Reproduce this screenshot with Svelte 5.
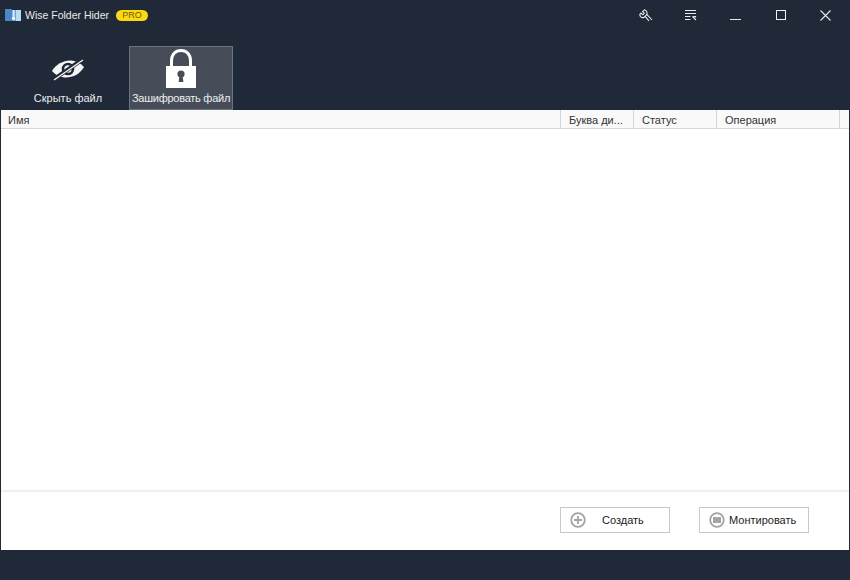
<script>
	const columns = [
		{ label: 'Имя', width: 560 },
		{ label: 'Буква ди...', width: 73 },
		{ label: 'Статус', width: 83 },
		{ label: 'Операция', width: 123 }
	];
</script>

<div class="window">
	<header class="titlebar">
		<div class="brand">
			<svg class="logo" width="16" height="12" viewBox="0 0 16 12">
				<path d="M0 0h6l1 1h9v11H0z" fill="#6ea6dc" />
				<path d="M0 0h5l1 1h2v11H0z" fill="#4b86c6" />
				<path d="M11 1h5v11h-5z" fill="#b9dcf5" />
				<path d="M7.500 1h2v8h-2z" fill="#dfeefa" />
				<circle cx="8.500" cy="9.500" r="1.700" fill="#eef6fc" />
			</svg>
			<span class="name">Wise Folder Hider</span>
			<span class="pro">PRO</span>
		</div>
		<div class="controls">
			<svg class="wrench" width="14" height="13" viewBox="0 0 14 13" fill="none" stroke="#e6e8ea" stroke-width="1.100">
				<path d="M5.500.800 3.600 2.600l1.700 1.700-1.500 1.500L2 4.100.800 5.500c0 2.300 2 3.700 4 2.900l1.500-1.100 1.200-1.500c1.300-1.700.4-4.200-2-5z" />
				<path d="M7.800 5.300 13 11M6.300 7.600l3.700 4.300" />
			</svg>
			<svg class="menu" width="13" height="12" viewBox="0 0 13 12" fill="none" stroke="#e6e8ea">
				<path d="M1 1.500h11M1 4.500h11M1 7.500h5.500M1 10.500h5.500" />
				<path d="M8.500 7.500h3v1M8.500 7.500l3.500 3.500" stroke-width="1.200" />
			</svg>
			<svg class="min" width="11" height="11" viewBox="0 0 11 11" stroke="#e6e8ea"><path d="M0 9.500h11" /></svg>
			<svg class="max" width="10" height="10" viewBox="0 0 10 10" fill="none" stroke="#f2f3f4"><rect x=".5" y=".5" width="9" height="9" /></svg>
			<svg class="close" width="11" height="11" viewBox="0 0 11 11" stroke="#e6e8ea" stroke-width="1.100"><path d="M.5.500l10 10M10.500.500l-10 10" /></svg>
		</div>
	</header>

	<nav class="tabs">
		<button class="tab">
			<span class="icon">
				<svg width="34" height="24" viewBox="0 0 34 24">
					<path d="M1 14C5 7 12 4 19 3.500c5-.2 10 2 14 6.500-4 7-11 10.500-18 10.500-5 0-10-2-14-6.500z" fill="#f5f5f5" />
					<circle cx="17" cy="12" r="5" fill="none" stroke="#1f2937" stroke-width="2.600" />
					<path d="M2 23 32 2" stroke="#1f2937" stroke-width="4" />
					<path d="M3 23 32 3" stroke="#f5f5f5" stroke-width="1.400" />
				</svg>
			</span>
			<span>Скрыть файл</span>
		</button>
		<button class="tab active">
			<span class="icon">
				<svg width="32" height="40" viewBox="0 0 32 40">
					<path d="M6.500 19V11.500C6.500 5.500 10.500 1.500 16 1.500s9.500 4 9.500 10V19" fill="none" stroke="#fff" stroke-width="3" />
					<rect x="1" y="17" width="30" height="22" fill="#fff" />
					<circle cx="16" cy="25" r="3.600" fill="#474d58" />
					<path d="M14.600 26h2.800l1 7h-4.800z" fill="#474d58" />
				</svg>
			</span>
			<span>Зашифровать файл</span>
		</button>
	</nav>

	<main class="panel">
		<div class="thead">
			{#each columns as col}
				<div class="th" style="width: {col.width}px">{col.label}</div>
			{/each}
		</div>
		<div class="tbody"></div>
		<div class="actions">
			<button class="action create">
				<svg width="16" height="16" viewBox="0 0 16 16" fill="none" stroke="#a3a3a3">
					<circle cx="8" cy="8" r="6.800" stroke-width="1.800" />
					<path d="M8 4v8M4 8h8" stroke-width="1.800" />
				</svg>
				<span>Создать</span>
			</button>
			<button class="action mount">
				<svg width="16" height="16" viewBox="0 0 16 16" fill="none">
					<circle cx="8" cy="8" r="6.800" stroke="#a3a3a3" stroke-width="1.800" />
					<path d="M4 5h3.500l.5.700.5-.7H12v6H8.500l-.5-.5-.5.500H4z" fill="#a3a3a3" />
				</svg>
				<span>Монтировать</span>
			</button>
		</div>
	</main>
</div>

<style>
	:global(body) {
		background: #1f2937;
	}

	.window {
		width: 850px;
		height: 580px;
		display: flex;
		flex-direction: column;
		background: #1f2937;
		font-family: "Liberation Sans", sans-serif;
		font-size: 11px;
		overflow: hidden;
	}

	.titlebar {
		height: 30px;
		display: flex;
		justify-content: space-between;
		align-items: center;
		padding-left: 5px;
		flex-shrink: 0;
	}

	.brand {
		display: flex;
		align-items: center;
		color: #e8eaec;
	}

	.name {
		margin-left: 4px;
		font-size: 10.500px;
	}

	.pro {
		margin-left: 7px;
		width: 32px;
		height: 11px;
		border-radius: 6px;
		background: #fdd90f;
		color: #6a5a10;
		font-size: 9px;
		line-height: 11px;
		text-align: center;
	}

	.controls {
		display: flex;
		align-items: center;
		padding-right: 19px;
	}

	.menu {
		margin-left: 31px;
	}

	.min {
		margin-left: 33px;
	}

	.max {
		margin-left: 35px;
	}

	.close {
		margin-left: 34px;
	}

	.tabs {
		height: 80px;
		display: flex;
		align-items: flex-end;
		padding-left: 16px;
		gap: 9px;
		flex-shrink: 0;
	}

	.tab {
		width: 104px;
		height: 64px;
		display: flex;
		flex-direction: column;
		align-items: center;
		justify-content: flex-end;
		padding: 0 0 6px;
		border: 0;
		background: none;
		color: #eceef0;
		font: inherit;
		white-space: nowrap;
	}

	.tab .icon {
		height: 44px;
		margin-bottom: 1px;
		display: flex;
		align-items: center;
		justify-content: center;
	}

	.tab.active {
		background: #474d58;
		box-shadow: inset 0 0 0 1px #6d737c;
		letter-spacing: -0.25px;
	}

	.panel {
		height: 440px;
		margin: 0 1px;
		display: flex;
		flex-direction: column;
		background: #fff;
		color: #333;
	}

	.thead {
		height: 18px;
		display: flex;
		background: #f9f9f9;
		border-bottom: 1px solid #d6d6d6;
		flex-shrink: 0;
	}

	.th {
		box-sizing: border-box;
		padding-left: 7px;
		line-height: 20px;
		border-right: 1px solid #d6d6d6;
	}

	.th:not(:first-child) {
		padding-left: 8px;
	}

	.tbody {
		flex: 1;
	}

	.actions {
		height: 60px;
		display: flex;
		justify-content: flex-end;
		align-items: center;
		gap: 29px;
		padding: 0 40px 2px 0;
		box-sizing: border-box;
		border-top: 2px solid #efefef;
		flex-shrink: 0;
	}

	.action {
		box-sizing: border-box;
		width: 110px;
		height: 26px;
		display: flex;
		align-items: center;
		padding: 0 0 0 9px;
		border: 1px solid #c8c8c8;
		background: #fff;
		color: #222;
		font: inherit;
	}

	.create span {
		margin-left: 16px;
	}

	.mount span {
		margin-left: 4px;
	}
</style>
